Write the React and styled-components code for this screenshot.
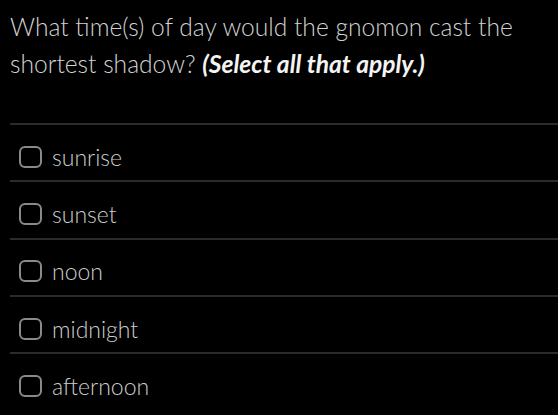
import styled, { createGlobalStyle } from 'styled-components';

const GlobalStyle = createGlobalStyle`
  html, body {
    margin: 0;
    padding: 0;
    background: #000;
  }
  body {
    font-family: Lato, "Open Sans", sans-serif;
  }
`;

const Page = styled.div`
  width: 558px;
  height: 415px;
  overflow: hidden;
  background: #000;
  padding: 8px 0 0 10px;
  box-sizing: border-box;
`;

const Question = styled.h1`
  margin: 0;
  font-size: 24.6px;
  font-weight: 300;
  line-height: 37px;
  color: #d2d2d2;
  b {
    font-weight: 700;
    font-style: italic;
    color: #f4f4f4;
  }
`;

const Options = styled.ul`
  list-style: none;
  margin: 41px 0 0;
  padding: 0;
`;

const Option = styled.li`
  display: flex;
  align-items: center;
  gap: 10px;
  height: 57.3px;
  padding: 8px 0 0 9px;
  box-sizing: border-box;
  border-top: 2px solid #2b2b2b;
`;

const Box = styled.span`
  width: 23px;
  height: 22px;
  box-sizing: border-box;
  border: 2px solid #8a8a8a;
  border-radius: 6px;
  flex-shrink: 0;
`;

const Label = styled.span`
  font-size: 23px;
  font-weight: 300;
  color: #cdcdcd;
`;

const answers = ['sunrise', 'sunset', 'noon', 'midnight', 'afternoon'];

export default function App() {
  return (
    <Page>
      <GlobalStyle />
      <Question>
        What time(s) of day would the gnomon cast the shortest shadow?{' '}
        <b>(Select all that apply.)</b>
      </Question>
      <Options>
        {answers.map((a) => (
          <Option key={a}>
            <Box />
            <Label>{a}</Label>
          </Option>
        ))}
      </Options>
    </Page>
  );
}
